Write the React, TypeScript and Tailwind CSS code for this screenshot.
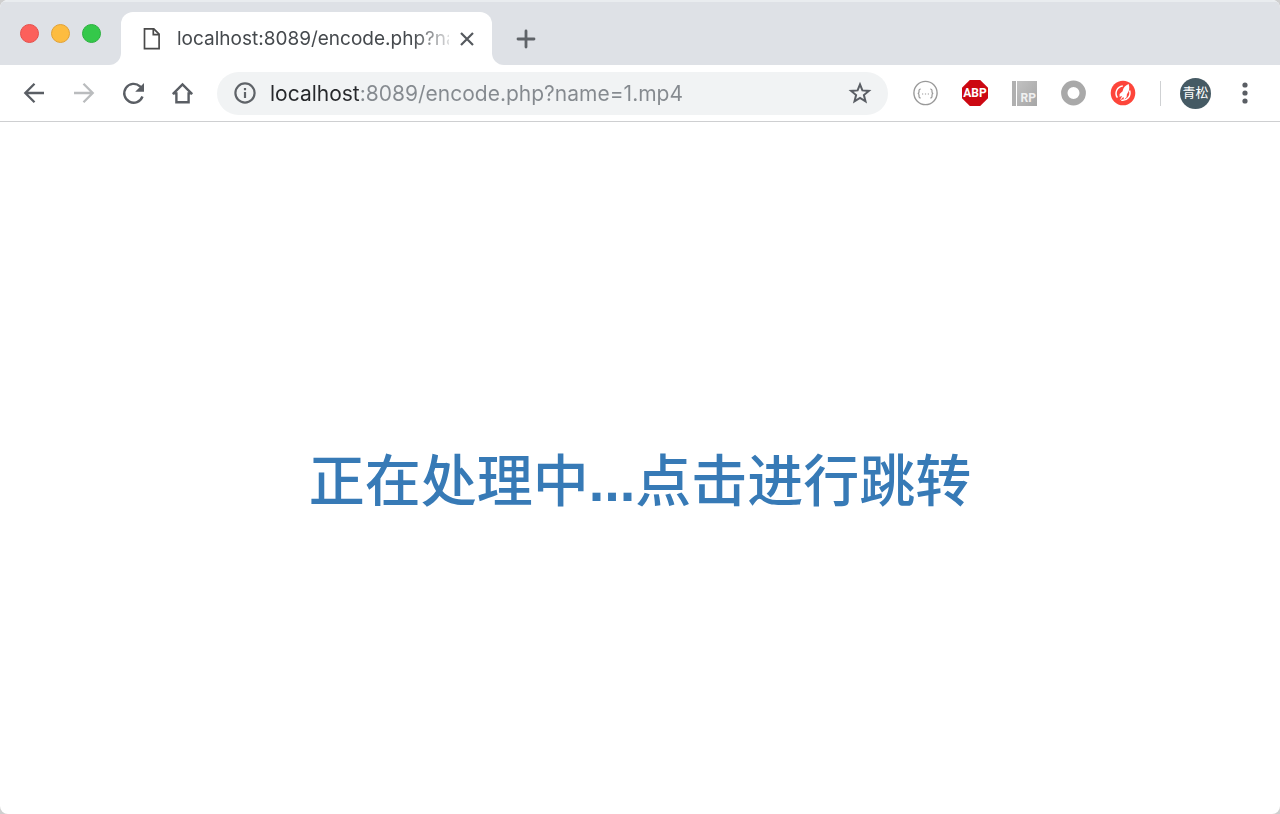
import { useState } from 'react';

const windowDots = [
  { id: 'Close', color: 'bg-[#fc605b] border-[#e5504c]' },
  { id: 'Minimize', color: 'bg-[#fdbc40] border-[#e2a236]' },
  { id: 'Zoom', color: 'bg-[#34c84a] border-[#2cb13f]' },
];

function Extensions() {
  return (
    <>
      <button aria-label="JSON viewer">
        <svg width="25" height="26" viewBox="0 0 25 26" fill="none" stroke="#999">
          <circle cx="12.5" cy="13" r="11.6" strokeWidth="1.4" />
          <path
            d="M7.8 9c-1.5 0-1.8.6-1.8 1.6v1.5c0 .9-.4 1.4-1.3 1.4.9 0 1.3.5 1.3 1.4v1.5c0 1 .3 1.6 1.8 1.6M17.2 9c1.5 0 1.8.6 1.8 1.6v1.5c0 .9.4 1.4 1.3 1.4-.9 0-1.3.5-1.3 1.4v1.5c0 1-.3 1.6-1.8 1.6"
            strokeWidth="1.2"
          />
          <path d="M9 14h1.2M11.9 14h1.2M14.8 14h1.2" strokeWidth="1.2" />
        </svg>
      </button>
      <button
        aria-label="Adblock Plus"
        className="flex size-[26px] items-center justify-center bg-[#cc0812] font-[Roboto,sans-serif] text-[12px] font-bold text-white [clip-path:polygon(30%_0,70%_0,100%_30%,100%_70%,70%_100%,30%_100%,0_70%,0_30%)]"
      >
        ABP
      </button>
      <button
        aria-label="RP"
        className="flex h-[25px] w-[25px] items-end justify-end border-l-4 border-[#b0b0b0] bg-linear-to-br from-[#c2c2c2] to-[#a6a6a6] pr-px font-[Roboto,sans-serif] text-[12px] leading-4 font-bold text-[#f0f0f0]"
      >
        <span className="mr-auto h-full w-px bg-white" />
        RP
      </button>
      <button aria-label="Recorder">
        <svg width="25" height="26" viewBox="0 0 25 26" fill="none">
          <circle cx="12.5" cy="13" r="9.2" stroke="#a9a9a9" strokeWidth="6.4" />
        </svg>
      </button>
      <button aria-label="Rocket">
        <svg width="26" height="26" viewBox="0 0 26 26" fill="none">
          <circle cx="13" cy="13" r="12.3" fill="#fd453a" />
          <path d="M12.8 6A7.4 7.4 0 0 0 7.4 17.6M19.6 10.500a7.400 7.400 0 0 1-8.300 9.700" stroke="#fff" strokeWidth="1.5" />
          <path d="M18.700 4c-3.400 1.300-5.500 3.800-6.100 7.200l-3 2.800v3l1.800-1.100.5.500-2.300 4.100 3.500-3.300.7.400-.2 2.300 3-2.600.3-3c2.300-2.700 3-6.300 1.800-10.300z" fill="#fff" />
        </svg>
      </button>
    </>
  );
}

export default function App() {
  const [url, setUrl] = useState('localhost:8089/encode.php?name=1.mp4');

  return (
    <div className="min-h-screen bg-[#cfcfcf] font-[Inter,'Noto_Sans_CJK_SC',sans-serif]">
      <div className="flex min-h-screen flex-col overflow-hidden rounded-lg bg-white">
        {/* tab strip */}
        <div className="flex h-[65px]">
          <div className="flex w-[121px] gap-3 rounded-br-xl border-t-2 border-[#e9ecef] bg-[#dee1e6] pt-[22px] pl-5">
            {windowDots.map((dot) => (
              <button
                key={dot.id}
                aria-label={dot.id}
                className={`size-[19px] rounded-full border ${dot.color}`}
              />
            ))}
          </div>
          <div className="w-[371px] border-t-2 border-[#e9ecef] bg-[#dee1e6] pt-[10px]">
            <div className="flex h-full items-center rounded-t-xl bg-white pl-[22px]">
              <svg width="18" height="24" viewBox="0 0 18 24" fill="none" stroke="#4a4a4a" strokeWidth="1.7">
                <path d="M1.5 1.8h9.3l5.3 5.4v14.4H1.5z" />
                <path d="M10.3 2v5.6h5.6" />
              </svg>
              <div className="ml-4 w-[272px] overflow-hidden pt-0.5 text-[19px] whitespace-nowrap text-[#45494d] [mask-image:linear-gradient(to_right,black_236px,transparent_280px)]">
                {url}
              </div>
              <button aria-label="Close tab" className="ml-[11px]">
                <svg width="14" height="14" viewBox="0 0 14 14" stroke="#55595e" strokeWidth="2.2">
                  <path d="M1 1l12 12M13 1L1 13" />
                </svg>
              </button>
            </div>
          </div>
          <div className="flex-1 rounded-bl-xl border-t-2 border-[#e9ecef] bg-[#dee1e6] pl-6">
            <button aria-label="New tab" className="flex h-full items-center pt-[10px]">
              <svg width="20" height="20" viewBox="0 0 20 20" stroke="#5f6368" strokeWidth="2.8" strokeLinecap="round">
                <path d="M10 2v16M2 10h16" />
              </svg>
            </button>
          </div>
        </div>

        {/* toolbar */}
        <div className="flex h-[57px] items-center border-b border-[#cecfd1] pr-[27px] pl-[21px]">
          <div className="flex items-center gap-6">
            <button aria-label="Back">
              <svg width="26" height="26" viewBox="0 0 26 26" fill="none" stroke="#5a5e64" strokeWidth="2.3">
                <path d="M23 13H5M13.5 3.7L4.3 13l9.2 9.3" />
              </svg>
            </button>
            <button aria-label="Forward">
              <svg width="26" height="26" viewBox="0 0 26 26" fill="none" stroke="#babcbe" strokeWidth="2.3">
                <path d="M3 13h18M12.5 3.7l9.2 9.3-9.2 9.3" />
              </svg>
            </button>
            <button aria-label="Reload">
              <svg width="25" height="26" viewBox="0 0 25 26" fill="none">
                <path d="M21.5 16.5A9.4 9.4 0 1 1 19 6.3L20.5 8" stroke="#5a5e64" strokeWidth="2.4" />
                <path d="M23 3v8.8h-8.8z" fill="#5a5e64" />
              </svg>
            </button>
            <button aria-label="Home">
              <svg width="25" height="26" viewBox="0 0 25 26" fill="none" stroke="#5a5e64" strokeWidth="2.4">
                <path d="M2.8 14.2L12.5 4.5l9.7 9.7M2.8 13.4h3.6v8.9h12.2v-8.9h3.6" />
              </svg>
            </button>
          </div>

          <div className="mr-[25px] ml-[22px] flex h-[43px] flex-1 items-center rounded-full bg-[#f1f3f4] px-4">
            <svg width="24" height="24" viewBox="0 0 24 24" fill="none" stroke="#5f6368" strokeWidth="2.2">
              <circle cx="12" cy="12" r="9.6" />
              <path d="M12 11v6M12 7v2.2" />
            </svg>
            <input
              aria-label="Address"
              value={url}
              onChange={(e) => setUrl(e.target.value)}
              className="ml-[13px] min-w-0 flex-1 bg-[linear-gradient(90deg,#26282b_91px,#858a8f_91px)] bg-clip-text pt-0.5 text-[21px] text-transparent caret-black outline-none"
            />
            <button aria-label="Bookmark">
              <svg width="24" height="24" viewBox="0 0 24 24" fill="none" stroke="#5a5e64" strokeWidth="2">
                <path d="M12 3.4l2.4 6 6.5.5-5 4.1 1.6 6.4-5.5-3.5-5.5 3.5L8.1 14l-5-4.1 6.5-.5z" />
              </svg>
            </button>
          </div>

          <div className="flex items-center gap-6">
            <Extensions />
            <div className="h-[25px] w-px bg-[#cfd1d3]" />
          </div>
          <button
            aria-label="Profile"
            className="ml-[19px] size-[31px] rounded-full bg-[#455a64] text-[13px] whitespace-nowrap text-white"
          >
            青松
          </button>
          <button aria-label="Menu" className="ml-[26px]">
            <svg width="16" height="24" viewBox="0 0 16 24" fill="#5a5e64">
              <circle cx="8" cy="4" r="2.6" />
              <circle cx="8" cy="12" r="2.6" />
              <circle cx="8" cy="20" r="2.6" />
            </svg>
          </button>
        </div>

        {/* page */}
        <main className="flex flex-1 items-center justify-center pt-[22px]">
          <h1 className="font-['Noto_Sans_CJK_SC',sans-serif] text-[56px] font-medium">
            <a href="#" className="text-[#377ab6]">
              正在处理中<span className="font-['Liberation_Sans',sans-serif] font-bold">...</span>点击进行跳转
            </a>
          </h1>
        </main>
      </div>
    </div>
  );
}
